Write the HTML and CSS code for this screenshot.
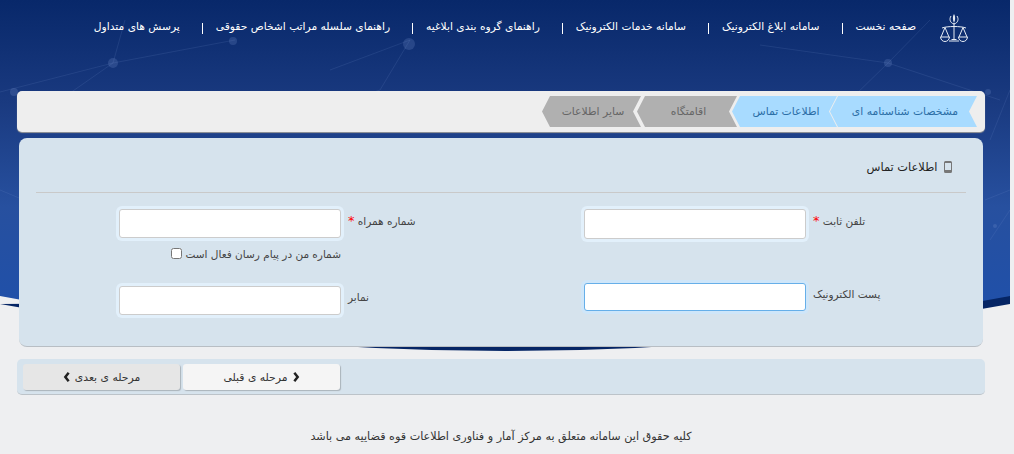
FILE: index.html
```html
<!DOCTYPE html>
<html lang="fa" dir="rtl">
<head>
<meta charset="utf-8">
<title>اطلاعات تماس</title>
<link rel="stylesheet" href="styles.css">
</head>
<body>
<svg class="hero" viewBox="0 0 1010 352" preserveAspectRatio="none" aria-hidden="true">
  <defs>
    <linearGradient id="sky" x1="0" y1="0" x2="0" y2="1">
      <stop offset="0" stop-color="#08286a"/>
      <stop offset="0.3" stop-color="#1a3a80"/>
      <stop offset="0.6" stop-color="#27509f"/>
      <stop offset="1" stop-color="#1d50ad"/>
    </linearGradient>
  </defs>
  <path d="M0 304 Q505 398 1010 304 L1010 296 L1010 296 Z" fill="#052565"/>
  <path d="M0 296 Q505 394 1010 296 V0 H0 Z" fill="url(#sky)"/>
  <g stroke="#7f9bd8" stroke-opacity=".14" fill="none">
    <path d="M0 92 L113 63 L235 40 M113 63 L60 100 M113 63 L125 20 M410 40 L380 90 L320 110 M410 40 L330 70 M888 63 L1000 100 M888 63 L850 100 M888 63 L760 45 M888 63 L930 20 M1010 90 L990 140"/>
    <path d="M0 190 L120 240 M990 240 L1010 210 M985 200 L1010 190"/>
  </g>
  <g fill="#7f9bd8" fill-opacity=".22">
    <circle cx="113" cy="63" r="5"/><circle cx="14" cy="92" r="4"/><circle cx="233" cy="41" r="4"/><circle cx="409" cy="44" r="6"/>
    <circle cx="888" cy="63" r="4"/><circle cx="988" cy="92" r="3"/><circle cx="995" cy="226" r="2"/>
  </g>
</svg>

<header class="topbar">
  <svg class="emblem" viewBox="0 0 30 32" aria-hidden="true">
    <g fill="none" stroke="#e8edf5" stroke-width="1">
      <path d="M15 10 V26 M3 15 C8 13 22 13 27 15 M10 28 H20 M12.500 26.500 H17.500"/>
      <path d="M6 14.500 L2 24 M6 14.500 L10 24 M24 14.500 L20 24 M24 14.500 L28 24"/>
      <path d="M1.500 24 H10.500 C10 30 2 30 1.500 24 Z M19.500 24 H28.500 C28 30 20 30 19.500 24 Z"/>
    </g>
    <path fill="none" stroke="#e8edf5" stroke-width="1" d="M12 3 C10 6 11 10 15 11 C19 10 20 6 18 3"/>
    <path d="M15 1 C13.500 3 13.500 7 15 10 C16.500 7 16.500 3 15 1 Z" fill="#e8edf5"/>
  </svg>
  <nav class="nav">
    <a class="nav-link">صفحه نخست</a>
    <a class="nav-link">سامانه ابلاغ الکترونیک</a>
    <a class="nav-link">سامانه خدمات الکترونیک</a>
    <a class="nav-link">راهنمای گروه بندی ابلاغیه</a>
    <a class="nav-link">راهنمای سلسله مراتب اشخاص حقوقی</a>
    <a class="nav-link">پرسش های متداول</a>
  </nav>
</header>

<main class="page">
  <div class="steps">
    <div class="step step-a on">مشخصات شناسنامه ای</div>
    <div class="step step-b on">اطلاعات تماس</div>
    <div class="step step-c">اقامتگاه</div>
    <div class="step step-d">سایر اطلاعات</div>
  </div>

  <section class="panel">
    <h2 class="panel-title">
      <svg class="phone" viewBox="0 0 8 12" aria-hidden="true"><path fill-rule="evenodd" d="M1.500 0 H6.500 A1.500 1.500 0 0 1 8 1.500 V10.500 A1.500 1.500 0 0 1 6.500 12 H1.500 A1.500 1.500 0 0 1 0 10.500 V1.500 A1.500 1.500 0 0 1 1.500 0 Z M1 2 V9 H7 V2 Z"/></svg>
      اطلاعات تماس
    </h2>
    <div class="form">
      <div class="col col-right">
        <div class="field first">
          <label class="label">تلفن ثابت <span class="req">*</span></label>
          <input class="input tall" type="text">
        </div>
        <div class="field email">
          <label class="label up">پست الکترونیک</label>
          <input class="input focus" type="text">
        </div>
      </div>
      <div class="col col-left">
        <div class="field first">
          <label class="label">شماره همراه <span class="req">*</span></label>
          <input class="input" type="text">
        </div>
        <label class="check">شماره من در پیام رسان فعال است <input class="box" type="checkbox"></label>
        <div class="field fax">
          <label class="label up">نمابر</label>
          <input class="input" type="text">
        </div>
      </div>
    </div>
  </section>

  <div class="actions">
    <button class="btn prev" type="button"><svg class="chev" viewBox="0 0 8 12" aria-hidden="true"><path d="M2 1 L6 6 L2 11" /></svg>مرحله ی قبلی</button>
    <button class="btn next" type="button">مرحله ی بعدی<svg class="chev" viewBox="0 0 8 12" aria-hidden="true"><path d="M6 1 L2 6 L6 11" /></svg></button>
  </div>

  <footer class="foot">کلیه حقوق این سامانه متعلق به مرکز آمار و فناوری اطلاعات قوه قضاییه می باشد</footer>
</main>
</body>
</html>
```
FILE: styles.css
```css
* { box-sizing: border-box; }
html, body { margin: 0; height: 454px; overflow: hidden; }
body {
  background: #eeeff1;
  font-family: "DejaVu Sans", sans-serif;
  font-size: 11px;
  color: #333;
  position: relative;
}
.hero { position: absolute; left: 0; top: 0; width: 1010px; height: 352px; }
.topbar {
  position: relative;
  height: 91px;
  padding: 13px 41px 0 0;
  margin-right: 4px;
  display: flex;
  align-items: flex-start;
  gap: 22px;
}
.emblem { width: 30px; height: 32px; flex: none; }
.nav { display: flex; margin-top: 7px; margin-right: 1px; }
.nav-link {
  color: #fff;
  font-size: 10.7px;
  line-height: 13px;
  padding-left: 14px;
  margin-left: 22px;
  position: relative;
  white-space: nowrap;
}
.nav-link:last-child { padding-left: 0; margin-left: 0; }
.nav-link:not(:last-child)::after {
  content: "";
  position: absolute;
  left: 0;
  top: 3px;
  height: 11px;
  border-left: 1px solid #fff;
}
.page { position: relative; padding: 0 29px 0 17px; }
.steps {
  height: 41px;
  background: #eee;
  border-radius: 5px;
  box-shadow: 0 1px 1px #999;
  padding: 5px 8px 0 0;
  display: flex;
}
.step {
  height: 31px;
  line-height: 31px;
  padding-left: 3px;
  background: #b0b0b0;
  color: #666;
  font-size: 10.8px;
  text-align: center;
  white-space: nowrap;
  clip-path: polygon(100% 0, calc(100% - 8px) 50%, 100% 100%, 8px 100%, 0 50%, 8px 0);
  flex: none;
  margin-right: -7px;
}
.step.on { background: #a8dbff; color: #2c6ea6; }
.step-a { width: 147px; margin-right: 0; }
.step-b { width: 105px; }
.step-c { width: 100px; margin-right: -5px; }
.step-d { width: 99px; margin-right: -4px; }
.panel {
  margin: 6px 2px 0;
  height: 209px;
  background: #d6e3ed;
  border-radius: 8px;
  border-bottom: 1px solid #b8bec4;
  padding: 0 17px;
}
.panel-title {
  margin: 0;
  height: 55px;
  padding: 21px 14px 0 0;
  font-size: 11.4px;
  line-height: 16px;
  font-weight: 400;
  color: #222;
  border-bottom: 1px solid #c9c9c9;
}
.phone { width: 8px; height: 12px; fill: #777; vertical-align: -2px; margin-left: 3px; }
.form { display: flex; justify-content: flex-end; padding-left: 83px; }
.col { display: flex; flex-direction: column; align-items: flex-end; padding-top: 16px; flex: none; }
.col-right { width: 382px; }
.col-left { width: 465px; }
.field { display: flex; align-items: flex-start; gap: 7px; }
.label { font-size: 10.5px; line-height: 14px; padding-top: 5px; color: #444; white-space: nowrap; }
.label.up { padding-top: 4px; }
.req { color: #f00; font-size: 13px; }
.input {
  width: 222px;
  height: 29px;
  margin: 0;
  background: #fff;
  border: 1px solid #ccc;
  border-radius: 3px;
  box-shadow: 0 0 0 3px #e2f0fb;
  outline: 0;
  padding: 0;
}
.input.tall { height: 30px; }
.input.focus { height: 28px; border-color: #66afe9; box-shadow: 0 0 0 3px #cfe6f9; }
.email { margin-top: 44px; }
.check {
  display: flex;
  align-items: center;
  gap: 3px;
  width: 222px;
  height: 15px;
  margin-top: 8px;
  font-size: 10.5px;
  color: #444;
  white-space: nowrap;
}
.box { width: 11px; height: 11px; margin: 0; }
.fax { margin-top: 25px; }
.actions {
  height: 36px;
  margin-top: 12px;
  background: #d6e3ed;
  border-radius: 5px;
  border-bottom: 1px solid #bcc3c9;
  display: flex;
  justify-content: flex-end;
  padding: 5px 6px 0;
  gap: 3px;
}
.btn {
  width: 157px;
  height: 26px;
  border: 0;
  border-radius: 3px;
  font-family: inherit;
  font-size: 10.8px;
  color: #333;
  box-shadow: 1px 1px 1px #aab3ba;
  display: flex;
  align-items: center;
  justify-content: center;
  gap: 4px;
  padding: 0;
}
.prev { background: #f5f5f5; }
.next { background: #e6e6e6; }
.chev { width: 8px; height: 10px; fill: none; stroke: #222; stroke-width: 3; }
.foot {
  margin-top: 34px;
  text-align: center;
  font-size: 11.2px;
  line-height: 16px;
  color: #333;
}
```
